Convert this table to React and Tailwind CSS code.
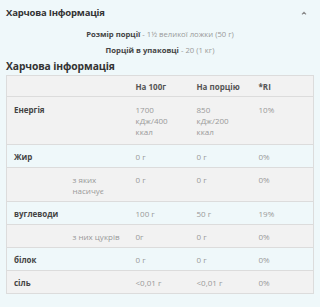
import React from "react";

const rows = [
  { label: "Енергія", sub: [], v: [["1700", "кДж/400", "ккал"], ["850", "кДж/200", "ккал"], ["10%"]], big: true },
  { label: "Жир", sub: [], v: [["0 г"], ["0 г"], ["0%"]] },
  { label: "", sub: ["з яких", "насичує"], v: [["0 г"], ["0 г"], ["0%"]] },
  { label: "вуглеводи", sub: [], v: [["100 г"], ["50 г"], ["19%"]] },
  { label: "", sub: ["з них цукрів"], v: [["0г"], ["0 г"], ["0%"]] },
  { label: "білок", sub: [], v: [["0 г"], ["0 г"], ["0%"]] },
  { label: "сіль", sub: [], v: [["<0,01 г"], ["<0,01 г"], ["0%"]] },
];

function Lines({ items }) {
  return items.map((t, k) => <div key={k}>{t}</div>);
}

export default function App() {
  return (
    <div className="w-[320px] h-[307px] bg-[#eff8fa] font-['Open_Sans',sans-serif] text-[#333] overflow-hidden">
      <div className="flex items-center justify-between pl-[6px] pr-[12px] pt-[4px] h-[22px]">
        <div className="text-[9.5px] font-bold tracking-[-0.2px] text-[#333]">Харчова Інформація</div>
        <svg width="8" height="6" viewBox="0 0 8 6" className="-mt-[1px]">
          <path d="M2 4.3 L4 2.3 L6 4.3" stroke="#8a8a8a" strokeWidth="1.2" fill="none" />
        </svg>
      </div>
      <div className="text-center text-[7.7px] leading-[12px] mt-[6px]">
        <span className="font-bold text-[#444]">Розмір порції</span>
        <span className="text-[#999]"> - 1½ великої ложки (50 г)</span>
      </div>
      <div className="text-center text-[7.7px] leading-[12px] mt-[4px]">
        <span className="font-bold text-[#444]">Порцій в упаковці</span>
        <span className="text-[#999]"> - 20 (1 кг)</span>
      </div>
      <div className="pl-[6px] text-[10.3px] font-bold tracking-[-0.1px] leading-[16px] mt-[2px] text-[#333]">Харчова інформація</div>
      <div className="px-[6px] mt-[1px]">
        <table className="w-[308px] table-fixed border-collapse border border-[#dcdcdc] text-[8px] leading-[11px]">
          <colgroup>
            <col className="w-[59px]" />
            <col className="w-[63px]" />
            <col className="w-[61px]" />
            <col className="w-[62px]" />
            <col />
          </colgroup>
          <thead>
            <tr className="bg-[#f2f2f2] border-b border-[#dcdcdc] h-[21px]">
              <th />
              <th />
              <th className="text-left font-bold text-[#555] pl-[7px] py-[4px]">На 100г</th>
              <th className="text-left font-bold text-[#555] pl-[7px] py-[4px]">На порцію</th>
              <th className="text-left font-bold text-[#555] pl-[7px] py-[4px]">*RI</th>
            </tr>
          </thead>
          <tbody>
            {rows.map((r, i) => {
              const pad = r.big ? "py-[7px]" : "py-[5.5px]";
              return (
                <tr
                  key={i}
                  className={(i % 2 === 0 ? "bg-[#f2f2f2]" : "bg-[#eff8fa]") + " border-b border-[#dcdcdc] align-top"}
                >
                  <td className={"pl-[7px] font-bold text-[#444] " + pad}>{r.label}</td>
                  <td className={"pl-[7px] text-[#999] " + pad}>
                    <Lines items={r.sub} />
                  </td>
                  {r.v.map((v, j) => (
                    <td key={j} className={"pl-[7px] text-[#999] pr-[4px] " + pad}>
                      <Lines items={v} />
                    </td>
                  ))}
                </tr>
              );
            })}
          </tbody>
        </table>
      </div>
    </div>
  );
}
